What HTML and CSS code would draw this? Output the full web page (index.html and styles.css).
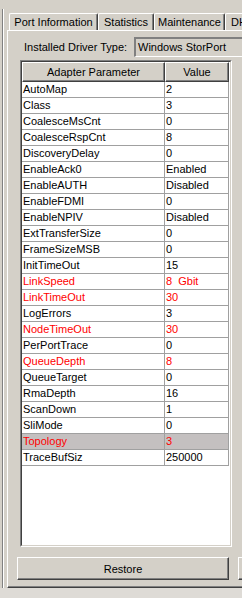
FILE: index.html
```html
<!DOCTYPE html>
<html lang="en">
<head>
    <meta charset="UTF-8">
    <meta name="viewport" content="width=device-width, initial-scale=1.0">
    <title>Port Information</title>
    <link rel="stylesheet" href="styles.css">
</head>
<body>
    <div class="frame">
        <!-- Tab strip -->
        <div class="tabs">
            <div class="tab tab-port">Port Information</div>
            <div class="tab tab-stats">Statistics</div>
            <div class="tab tab-maint">Maintenance</div>
            <div class="tab tab-dh">DHCHAP</div>
        </div>

        <div class="panel">
            <div class="driver-row">
                <span class="driver-label">Installed Driver Type:</span>
                <div class="driver-box">Windows StorPort</div>
            </div>

            <!-- Adapter parameter list -->
            <div class="list">
                <div class="list-inner">
                    <table class="params">
                        <thead>
                            <tr>
                                <th class="col-name">Adapter Parameter</th>
                                <th class="col-value">Value</th>
                            </tr>
                        </thead>
                        <tbody>
                            <tr><td>AutoMap</td><td>2</td></tr>
                            <tr><td>Class</td><td>3</td></tr>
                            <tr><td>CoalesceMsCnt</td><td>0</td></tr>
                            <tr><td>CoalesceRspCnt</td><td>8</td></tr>
                            <tr><td>DiscoveryDelay</td><td>0</td></tr>
                            <tr><td>EnableAck0</td><td>Enabled</td></tr>
                            <tr><td>EnableAUTH</td><td>Disabled</td></tr>
                            <tr><td>EnableFDMI</td><td>0</td></tr>
                            <tr><td>EnableNPIV</td><td>Disabled</td></tr>
                            <tr><td>ExtTransferSize</td><td>0</td></tr>
                            <tr><td>FrameSizeMSB</td><td>0</td></tr>
                            <tr><td>InitTimeOut</td><td>15</td></tr>
                            <tr class="changed"><td>LinkSpeed</td><td>8&nbsp; Gbit</td></tr>
                            <tr class="changed"><td>LinkTimeOut</td><td>30</td></tr>
                            <tr><td>LogErrors</td><td>3</td></tr>
                            <tr class="changed"><td>NodeTimeOut</td><td>30</td></tr>
                            <tr><td>PerPortTrace</td><td>0</td></tr>
                            <tr class="changed"><td>QueueDepth</td><td>8</td></tr>
                            <tr><td>QueueTarget</td><td>0</td></tr>
                            <tr><td>RmaDepth</td><td>16</td></tr>
                            <tr><td>ScanDown</td><td>1</td></tr>
                            <tr><td>SliMode</td><td>0</td></tr>
                            <tr class="changed selected"><td>Topology</td><td>3</td></tr>
                            <tr><td>TraceBufSiz</td><td>250000</td></tr>
                        </tbody>
                    </table>
                </div>
            </div>

            <div class="actions">
                <button class="btn">Restore</button>
                <button class="btn" aria-label="Apply"></button>
            </div>
        </div>
    </div>
    <div class="statusbar"></div>
</body>
</html>
```

FILE: styles.css
```css
* {
    margin: 0;
    padding: 0;
    box-sizing: border-box;
}

html, body {
    overflow: hidden;
}

body {
    width: 242px;
    height: 598px;
    background-color: #d4d0c8;
    color: #000;
    font-family: "Liberation Sans", Arial, sans-serif;
    font-size: 11px;
}

.frame {
    width: 340px;
    height: 579px;
    margin: 9px 0 0 2px;
    padding-left: 4px;
    border-left: 1px solid #808080;
    box-shadow: inset 1px 0 0 #fff;
    display: flex;
    flex-direction: column;
}

/* Tabs */
.tabs {
    display: flex;
    height: 17px;
    margin: 4px 0 0 2px;
}

.tab {
    height: 17px;
    line-height: 16px;
    text-align: center;
    white-space: nowrap;
    border-top: 1px solid #fff;
    border-left: 1px solid #fff;
    border-right: 1px solid #404040;
    border-radius: 2px 2px 0 0;
    box-shadow: inset -1px 0 0 #808080;
}

.tab-port { width: 89px; }
.tab-stats { width: 56px; }
.tab-maint { width: 71px; }
.tab-dh { width: 60px; text-align: left; padding-left: 5px; }

/* Tab page */
.panel {
    flex: 1;
    display: flex;
    flex-direction: column;
    border-top: 1px solid #fff;
    border-left: 1px solid #fff;
    border-bottom: 1px solid #404040;
    box-shadow: inset 0 -1px 0 #808080;
}

.driver-row {
    display: flex;
    align-items: center;
    height: 20px;
    margin: 6px 0 0 16px;
}

.driver-label {
    width: 110px;
    flex-shrink: 0;
}

.driver-box {
    flex: 1;
    height: 20px;
    line-height: 16px;
    padding-left: 2px;
    border-top: 2px solid #808080;
    border-left: 2px solid #808080;
    border-bottom: 1px solid #fff;
    border-right: 1px solid #fff;
    white-space: nowrap;
}

/* List view */
.list {
    width: 212px;
    height: 487px;
    margin: 3px 0 0 12px;
    border-top: 1px solid #808080;
    border-left: 1px solid #808080;
    border-right: 1px solid #fff;
    border-bottom: 1px solid #fff;
}

.list-inner {
    height: 100%;
    background-color: #fff;
    border-top: 1px solid #404040;
    border-left: 1px solid #404040;
    border-right: 1px solid #d4d0c8;
    border-bottom: 1px solid #d4d0c8;
}

.params {
    border-collapse: separate;
    border-spacing: 0;
    table-layout: fixed;
    width: 207px;
}

.params th {
    height: 20px;
    font-weight: normal;
    text-align: center;
    background-color: #d4d0c8;
    border-top: 1px solid #fff;
    border-left: 1px solid #fff;
    border-right: 1px solid #404040;
    border-bottom: 1px solid #404040;
    box-shadow: inset -1px -1px 0 #808080;
}

.col-name { width: 143px; }
.col-value { width: 64px; }

.params td {
    height: 16px;
    line-height: 15px;
    padding-left: 1px;
    white-space: nowrap;
    overflow: hidden;
    border-right: 1px solid #a0a0a0;
    border-bottom: 1px solid #a0a0a0;
}

.params tr.changed td {
    color: #ff0000;
}

.params tr.selected td {
    background-color: #c4c0c0;
}

/* Buttons */
.actions {
    display: flex;
    gap: 9px;
    margin: 10px 0 0 9px;
}

.btn {
    width: 212px;
    height: 23px;
    flex-shrink: 0;
    background-color: #d4d0c8;
    color: #000;
    font-family: inherit;
    font-size: 11px;
    border-top: 1px solid #fff;
    border-left: 1px solid #fff;
    border-right: 1px solid #404040;
    border-bottom: 1px solid #404040;
    box-shadow: inset -1px -1px 0 #808080;
}

.statusbar {
    height: 10px;
    background-color: #dedbd6;
}
```
